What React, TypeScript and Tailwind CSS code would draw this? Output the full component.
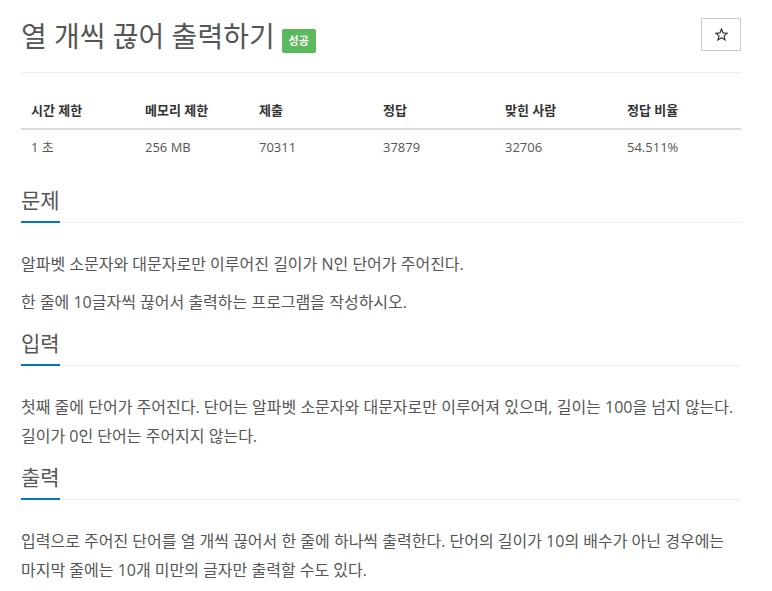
import React from "react";

const font = { fontFamily: '"Open Sans", "Noto Sans CJK KR", sans-serif' };

function SectionHeading({ title }: { title: string }) {
  return (
    <div className="flex items-end">
      <h2 className="text-[21px] leading-[28px] pb-[7px] text-[#555] border-b-[2px] border-[#0076c0] font-normal">
        {title}
      </h2>
      <div className="flex-1 border-b border-[#eeeeee]" />
    </div>
  );
}

function Section({ title, paras }: { title: string; paras: string[] }) {
  return (
    <section className="mt-[12px]">
      <SectionHeading title={title} />
      <div className="mt-[27px]">
        {paras.map((p, i) => (
          <p key={i} className="text-[16px] leading-[29px] text-[#555] mb-[9px]">
            {p}
          </p>
        ))}
      </div>
    </section>
  );
}

export default function App() {
  const headers = ["시간 제한", "메모리 제한", "제출", "정답", "맞힌 사람", "정답 비율"];
  const values = ["1 초", "256 MB", "70311", "37879", "32706", "54.511%"];
  return (
    <div className="bg-white min-h-[591px] w-[772px]" style={font}>
      <div className="ml-[21px] w-[720px] pt-[18px]">
        <div className="flex items-start justify-between">
          <div className="flex items-start">
            <span className="text-[28px] leading-[36px] text-[#555]">열 개씩 끊어 출력하기</span>
            <span className="ml-[7px] mt-[11px] h-[24px] w-[34px] bg-[#5cb85c] text-white text-[11px] font-bold flex items-center justify-center rounded-[2px]">
              성공
            </span>
          </div>
          <button className="w-[40px] h-[33px] border border-[#cccccc] bg-white flex items-center justify-center">
            <svg width="13" height="13" viewBox="0 0 24 24" fill="none" stroke="#333" strokeWidth="2.2" strokeLinejoin="miter">
              <polygon points="12,2 14.9,8.9 22.5,9.6 16.8,14.6 18.5,22 12,18.1 5.5,22 7.2,14.6 1.5,9.6 9.1,8.9" />
            </svg>
          </button>
        </div>
        <div className="mt-[18px] border-t border-[#eeeeee]" />
        <div className="mt-[20px] mb-[22px]">
          <div className="grid grid-cols-[114px_114px_124px_122px_122px_124px] border-b-2 border-[#dddddd]">
            {headers.map((h) => (
              <div key={h} className="pl-[10px] py-[8px] text-[13px] leading-[18.5px] font-bold text-[#333]">
                {h}
              </div>
            ))}
          </div>
          <div className="grid grid-cols-[114px_114px_124px_122px_122px_124px]">
            {values.map((v) => (
              <div key={v} className="pl-[10px] py-[8px] text-[13px] leading-[18.5px] text-[#555]">
                {v}
              </div>
            ))}
          </div>
        </div>
        <Section
          title="문제"
          paras={[
            "알파벳 소문자와 대문자로만 이루어진 길이가 N인 단어가 주어진다.",
            "한 줄에 10글자씩 끊어서 출력하는 프로그램을 작성하시오.",
          ]}
        />
        <Section
          title="입력"
          paras={[
            "첫째 줄에 단어가 주어진다. 단어는 알파벳 소문자와 대문자로만 이루어져 있으며, 길이는 100을 넘지 않는다. 길이가 0인 단어는 주어지지 않는다.",
          ]}
        />
        <Section
          title="출력"
          paras={[
            "입력으로 주어진 단어를 열 개씩 끊어서 한 줄에 하나씩 출력한다. 단어의 길이가 10의 배수가 아닌 경우에는 마지막 줄에는 10개 미만의 글자만 출력할 수도 있다.",
          ]}
        />
      </div>
    </div>
  );
}
